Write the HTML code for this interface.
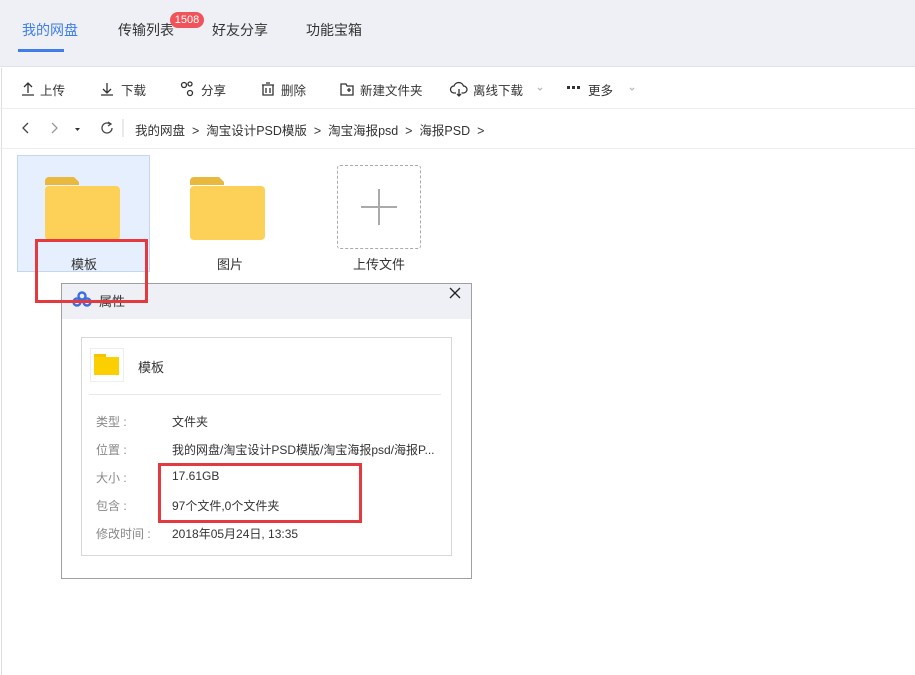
<!DOCTYPE html>
<html><head><meta charset="utf-8"><style>
*{margin:0;padding:0;box-sizing:border-box}
body{width:915px;height:675px;position:relative;background:#fff;font-family:"Liberation Sans","Noto Sans CJK SC",sans-serif;font-size:13px;color:#333;overflow:hidden}
.abs{position:absolute}
.top{left:0;top:0;width:915px;height:67px;background:#eef0f5;border-bottom:1px solid #dfe2ea}
.tab{top:20px;font-size:14px;color:#333}
.tb{top:80px;font-size:12.5px;color:#333}
.bc{top:120px;font-size:12.5px;color:#333}
.lbl{color:#888;left:96px;font-size:12px}
.val{left:172px;color:#333;font-size:12px}
</style></head><body>
<div class="abs top"></div>
<div class="abs tab" style="left:22px;color:#3f7ee8">我的网盘</div>
<div class="abs" style="left:18px;top:49px;width:46px;height:3px;background:#3f7ee8"></div>
<div class="abs tab" style="left:118px">传输列表</div>
<div class="abs" style="left:170px;top:12px;width:34px;height:16px;border-radius:8px;background:#f0535a;color:#fff;font-size:11px;text-align:center;line-height:16px">1508</div>
<div class="abs tab" style="left:212px">好友分享</div>
<div class="abs tab" style="left:306px">功能宝箱</div>
<div class="abs" style="left:1px;top:68px;width:1px;height:607px;background:#dcdcdc"></div>
<div class="abs" style="left:0;top:108px;width:915px;height:1px;background:#ececec"></div>
<div class="abs" style="left:0;top:148px;width:915px;height:1px;background:#ececec"></div>
<svg class="abs" style="left:0;top:68px" width="660" height="40" fill="none" stroke="#333" stroke-width="1.3">
<path d="M22 27h12M28 25V15M24 19l4-4 4 4"/>
<path d="M101 27h12M107 15v10M103 21l4 4 4-4"/>
<circle cx="184" cy="17" r="2.5"/><circle cx="190" cy="16" r="2"/><circle cx="190" cy="25" r="2.5"/>
<path d="M262 17h12M266 15h4M263 17v10h10V17M266 20v5M270 20v5"/>
<path d="M341 16h5l1 2h6v9h-12zM347 22h4M349 20v4"/>
<path d="M456 25h-2a3.5 3.5 0 0 1 0-7 5 5 0 0 1 9.5 0 3.5 3.5 0 0 1 0 7h-2M459 21v7M457 26l2 2 2-2"/>
<path d="M538 20l2 2 2-2M630 20l2 2 2-2" stroke="#bbb"/>
</svg>
<div class="abs" style="left:567px;top:86px;width:3px;height:3px;background:#333;box-shadow:5px 0 #333,10px 0 #333"></div>
<div class="abs tb" style="left:40px">上传</div>
<div class="abs tb" style="left:121px">下载</div>
<div class="abs tb" style="left:201px">分享</div>
<div class="abs tb" style="left:281px">删除</div>
<div class="abs tb" style="left:360px">新建文件夹</div>
<div class="abs tb" style="left:473px">离线下载</div>
<div class="abs tb" style="left:588px">更多</div>
<svg class="abs" style="left:0;top:108px" width="130" height="40" fill="none" stroke="#444" stroke-width="1.3">
<path d="M28 15l-5 5 5 5"/><path d="M52 15l5 5-5 5" stroke="#999"/>
<path d="M75 20h5l-2.5 3z" fill="#333" stroke="none"/>
<path d="M110 16a5 5 0 1 0 2 4M108 14l3 2-3 2"/>
<path d="M123 11v18" stroke="#ddd"/>
</svg>
<div class="abs bc" style="left:135px">我的网盘 &nbsp;&gt;&nbsp; 淘宝设计PSD模版 &nbsp;&gt;&nbsp; 淘宝海报psd &nbsp;&gt;&nbsp; 海报PSD &nbsp;&gt;</div>
<div class="abs" style="left:17px;top:155px;width:133px;height:117px;background:#e6effd;border:1px solid #c6d6f0"></div>
<svg class="abs" style="left:45px;top:177px" width="76" height="64"><path d="M0 4a4 4 0 0 1 4-4h25l5 5v3H0z" fill="#e8b93c"/><rect x="0" y="9" width="75" height="54" rx="4" fill="#fdd157"/></svg>
<svg class="abs" style="left:190px;top:177px" width="76" height="64"><path d="M0 4a4 4 0 0 1 4-4h25l5 5v3H0z" fill="#e8b93c"/><rect x="0" y="9" width="75" height="54" rx="4" fill="#fdd157"/></svg>
<div class="abs" style="left:337px;top:165px;width:84px;height:84px;border:1px dashed #aaa;border-radius:3px"></div>
<div class="abs" style="left:361px;top:206px;width:36px;height:2px;background:#aaa"></div>
<div class="abs" style="left:378px;top:189px;width:2px;height:36px;background:#aaa"></div>
<div class="abs" style="left:71px;top:254px">模板</div>
<div class="abs" style="left:217px;top:254px">图片</div>
<div class="abs" style="left:353px;top:254px">上传文件</div>
<div class="abs" style="left:61px;top:283px;width:411px;height:296px;border:1px solid #a0a0a0;background:#fff"></div>
<div class="abs" style="left:62px;top:284px;width:409px;height:35px;background:#eef0f6"></div>
<svg class="abs" style="left:72px;top:291px" width="20" height="16" fill="none" stroke="#3b6fe0" stroke-width="2.4"><circle cx="10" cy="5" r="3.5"/><circle cx="5" cy="11" r="3.5"/><circle cx="15" cy="11" r="3.5"/></svg>
<div class="abs" style="left:99px;top:291px">属性</div>
<svg class="abs" style="left:449px;top:287px" width="12" height="12" stroke="#222" stroke-width="1.3"><path d="M1 1l10 10M11 1L1 11"/></svg>
<div class="abs" style="left:81px;top:337px;width:371px;height:219px;border:1px solid #d8d8d8"></div>
<div class="abs" style="left:90px;top:348px;width:34px;height:34px;border:1px solid #eee"></div>
<svg class="abs" style="left:94px;top:354px" width="26" height="22"><rect x="0" y="0" width="12" height="6" fill="#f5c400"/><rect x="0" y="3" width="25" height="18" fill="#fcd000"/></svg>
<div class="abs" style="left:138px;top:357px">模板</div>
<div class="abs" style="left:89px;top:394px;width:352px;height:1px;background:#e8e8e8"></div>
<div class="abs lbl" style="top:413px">类型 :</div><div class="abs val" style="top:413px">文件夹</div>
<div class="abs lbl" style="top:441px">位置 :</div><div class="abs val" style="top:441px;width:270px;white-space:nowrap;overflow:hidden">我的网盘/淘宝设计PSD模版/淘宝海报psd/海报P...</div>
<div class="abs lbl" style="top:469px">大小 :</div><div class="abs val" style="top:469px">17.61GB</div>
<div class="abs lbl" style="top:497px">包含 :</div><div class="abs val" style="top:497px">97个文件,0个文件夹</div>
<div class="abs lbl" style="top:525px">修改时间 :</div><div class="abs val" style="top:525px">2018年05月24日, 13:35</div>
<div class="abs" style="left:35px;top:239px;width:113px;height:64px;border:3px solid #e53940"></div>
<div class="abs" style="left:158px;top:463px;width:204px;height:60px;border:3px solid #e53940"></div>
</body></html>
